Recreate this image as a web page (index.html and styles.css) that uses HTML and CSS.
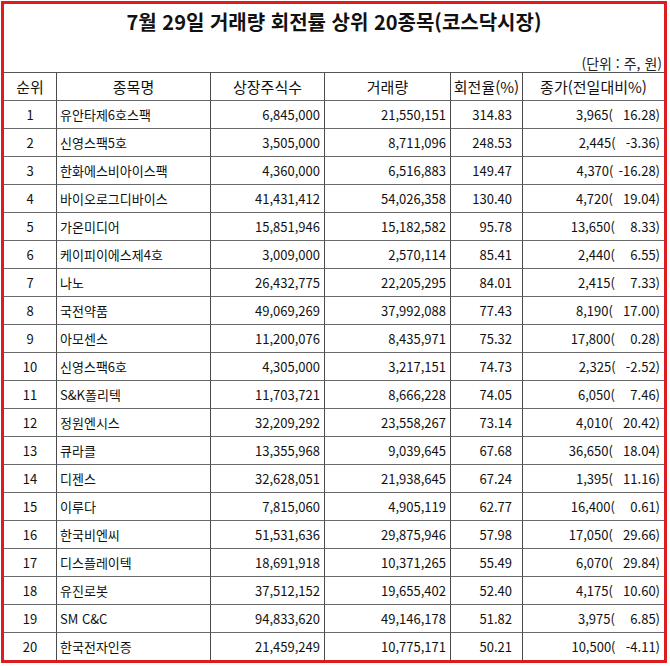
FILE: index.html
```html
<!DOCTYPE html>
<html lang="ko">
<head>
<meta charset="utf-8">
<title>7월 29일 거래량 회전률 상위 20종목(코스닥시장)</title>
<link rel="stylesheet" href="styles.css">
</head>
<body>
<div class="frame">
  <h1 class="title">7월 29일 거래량 회전률 상위 20종목(코스닥시장)</h1>
  <div class="unit">(단위 : 주, 원)</div>
  <table class="grid">
    <colgroup>
      <col class="c-rank"><col class="c-name"><col class="c-shares"><col class="c-vol"><col class="c-rate"><col class="c-price">
    </colgroup>
    <thead>
      <tr><th>순위</th><th>종목명</th><th>상장주식수</th><th>거래량</th><th>회전율(%)</th><th>종가(전일대비%)</th></tr>
    </thead>
    <tbody>
      <tr><td class="rank">1</td><td class="name">유안타제6호스팩</td><td class="num">6,845,000</td><td class="num">21,550,151</td><td class="rate">314.83</td><td class="price">3,965(  16.28)</td></tr>
      <tr><td class="rank">2</td><td class="name">신영스팩5호</td><td class="num">3,505,000</td><td class="num">8,711,096</td><td class="rate">248.53</td><td class="price">2,445(  -3.36)</td></tr>
      <tr><td class="rank">3</td><td class="name">한화에스비아이스팩</td><td class="num">4,360,000</td><td class="num">6,516,883</td><td class="rate">149.47</td><td class="price">4,370( -16.28)</td></tr>
      <tr><td class="rank">4</td><td class="name">바이오로그디바이스</td><td class="num">41,431,412</td><td class="num">54,026,358</td><td class="rate">130.40</td><td class="price">4,720(  19.04)</td></tr>
      <tr><td class="rank">5</td><td class="name">가온미디어</td><td class="num">15,851,946</td><td class="num">15,182,582</td><td class="rate">95.78</td><td class="price">13,650(   8.33)</td></tr>
      <tr><td class="rank">6</td><td class="name">케이피이에스제4호</td><td class="num">3,009,000</td><td class="num">2,570,114</td><td class="rate">85.41</td><td class="price">2,440(   6.55)</td></tr>
      <tr><td class="rank">7</td><td class="name">나노</td><td class="num">26,432,775</td><td class="num">22,205,295</td><td class="rate">84.01</td><td class="price">2,415(   7.33)</td></tr>
      <tr><td class="rank">8</td><td class="name">국전약품</td><td class="num">49,069,269</td><td class="num">37,992,088</td><td class="rate">77.43</td><td class="price">8,190(  17.00)</td></tr>
      <tr><td class="rank">9</td><td class="name">아모센스</td><td class="num">11,200,076</td><td class="num">8,435,971</td><td class="rate">75.32</td><td class="price">17,800(   0.28)</td></tr>
      <tr><td class="rank">10</td><td class="name">신영스팩6호</td><td class="num">4,305,000</td><td class="num">3,217,151</td><td class="rate">74.73</td><td class="price">2,325(  -2.52)</td></tr>
      <tr><td class="rank">11</td><td class="name">S&amp;K폴리텍</td><td class="num">11,703,721</td><td class="num">8,666,228</td><td class="rate">74.05</td><td class="price">6,050(   7.46)</td></tr>
      <tr><td class="rank">12</td><td class="name">정원엔시스</td><td class="num">32,209,292</td><td class="num">23,558,267</td><td class="rate">73.14</td><td class="price">4,010(  20.42)</td></tr>
      <tr><td class="rank">13</td><td class="name">큐라클</td><td class="num">13,355,968</td><td class="num">9,039,645</td><td class="rate">67.68</td><td class="price">36,650(  18.04)</td></tr>
      <tr><td class="rank">14</td><td class="name">디젠스</td><td class="num">32,628,051</td><td class="num">21,938,645</td><td class="rate">67.24</td><td class="price">1,395(  11.16)</td></tr>
      <tr><td class="rank">15</td><td class="name">이루다</td><td class="num">7,815,060</td><td class="num">4,905,119</td><td class="rate">62.77</td><td class="price">16,400(   0.61)</td></tr>
      <tr><td class="rank">16</td><td class="name">한국비엔씨</td><td class="num">51,531,636</td><td class="num">29,875,946</td><td class="rate">57.98</td><td class="price">17,050(  29.66)</td></tr>
      <tr><td class="rank">17</td><td class="name">디스플레이텍</td><td class="num">18,691,918</td><td class="num">10,371,265</td><td class="rate">55.49</td><td class="price">6,070(  29.84)</td></tr>
      <tr><td class="rank">18</td><td class="name">유진로봇</td><td class="num">37,512,152</td><td class="num">19,655,402</td><td class="rate">52.40</td><td class="price">4,175(  10.60)</td></tr>
      <tr><td class="rank">19</td><td class="name">SM C&amp;C</td><td class="num">94,833,620</td><td class="num">49,146,178</td><td class="rate">51.82</td><td class="price">3,975(   6.85)</td></tr>
      <tr><td class="rank">20</td><td class="name">한국전자인증</td><td class="num">21,459,249</td><td class="num">10,775,171</td><td class="rate">50.21</td><td class="price">10,500(  -4.11)</td></tr>
    </tbody>
  </table>
</div>
</body>
</html>
```

FILE: styles.css
```css
html, body {
  margin: 0;
  padding: 0;
  background: #ffffff;
}

body {
  font-family: "Noto Sans CJK KR", "Noto Sans", sans-serif;
  color: #111111;
}

.frame {
  margin: 1px 0 0 1px;
  width: 660px;
  height: 656px;
  border: 3px solid #dc1c1f;
  display: flex;
  flex-direction: column;
  overflow: hidden;
}

.title {
  margin: 0;
  padding-top: 4px;
  height: 28px;
  line-height: 28px;
  font-size: 20px;
  font-weight: bold;
  text-align: center;
  color: #111111;
}

.unit {
  margin-top: 18px;
  height: 18px;
  line-height: 18px;
  font-size: 14px;
  text-align: right;
  padding-right: 2px;
  color: #222222;
}

.grid {
  width: 660px;
  table-layout: fixed;
  border-collapse: separate;
  border-spacing: 0;
  border-top: 1px solid #555555;
}

.c-rank { width: 53px; }
.c-name { width: 154px; }
.c-shares { width: 114px; }
.c-vol { width: 126px; }
.c-rate { width: 72px; }
.c-price { width: 141px; }

.grid th,
.grid td {
  height: 27px;
  padding: 0;
  border-bottom: 1px solid #6a6a6a;
  border-right: 1px solid #4a4a4a;
  white-space: nowrap;
  overflow: hidden;
}

.grid th:last-child,
.grid td:last-child {
  border-right: none;
}

.grid tbody tr:last-child td {
  border-bottom: none;
}

.grid th {
  font-size: 15px;
  font-weight: normal;
  text-align: center;
  color: #111111;
}

.grid td {
  font-size: 13px;
  color: #111111;
}

.grid td.rank {
  text-align: center;
}

.grid td.name {
  text-align: left;
  padding-left: 3px;
}

.grid td.num {
  text-align: right;
  padding-right: 4px;
}

.grid td.rate {
  text-align: right;
  padding-right: 10px;
}

.grid td.price {
  text-align: right;
  padding-right: 4px;
  white-space: pre;
  word-spacing: 1.5px;
}
```
